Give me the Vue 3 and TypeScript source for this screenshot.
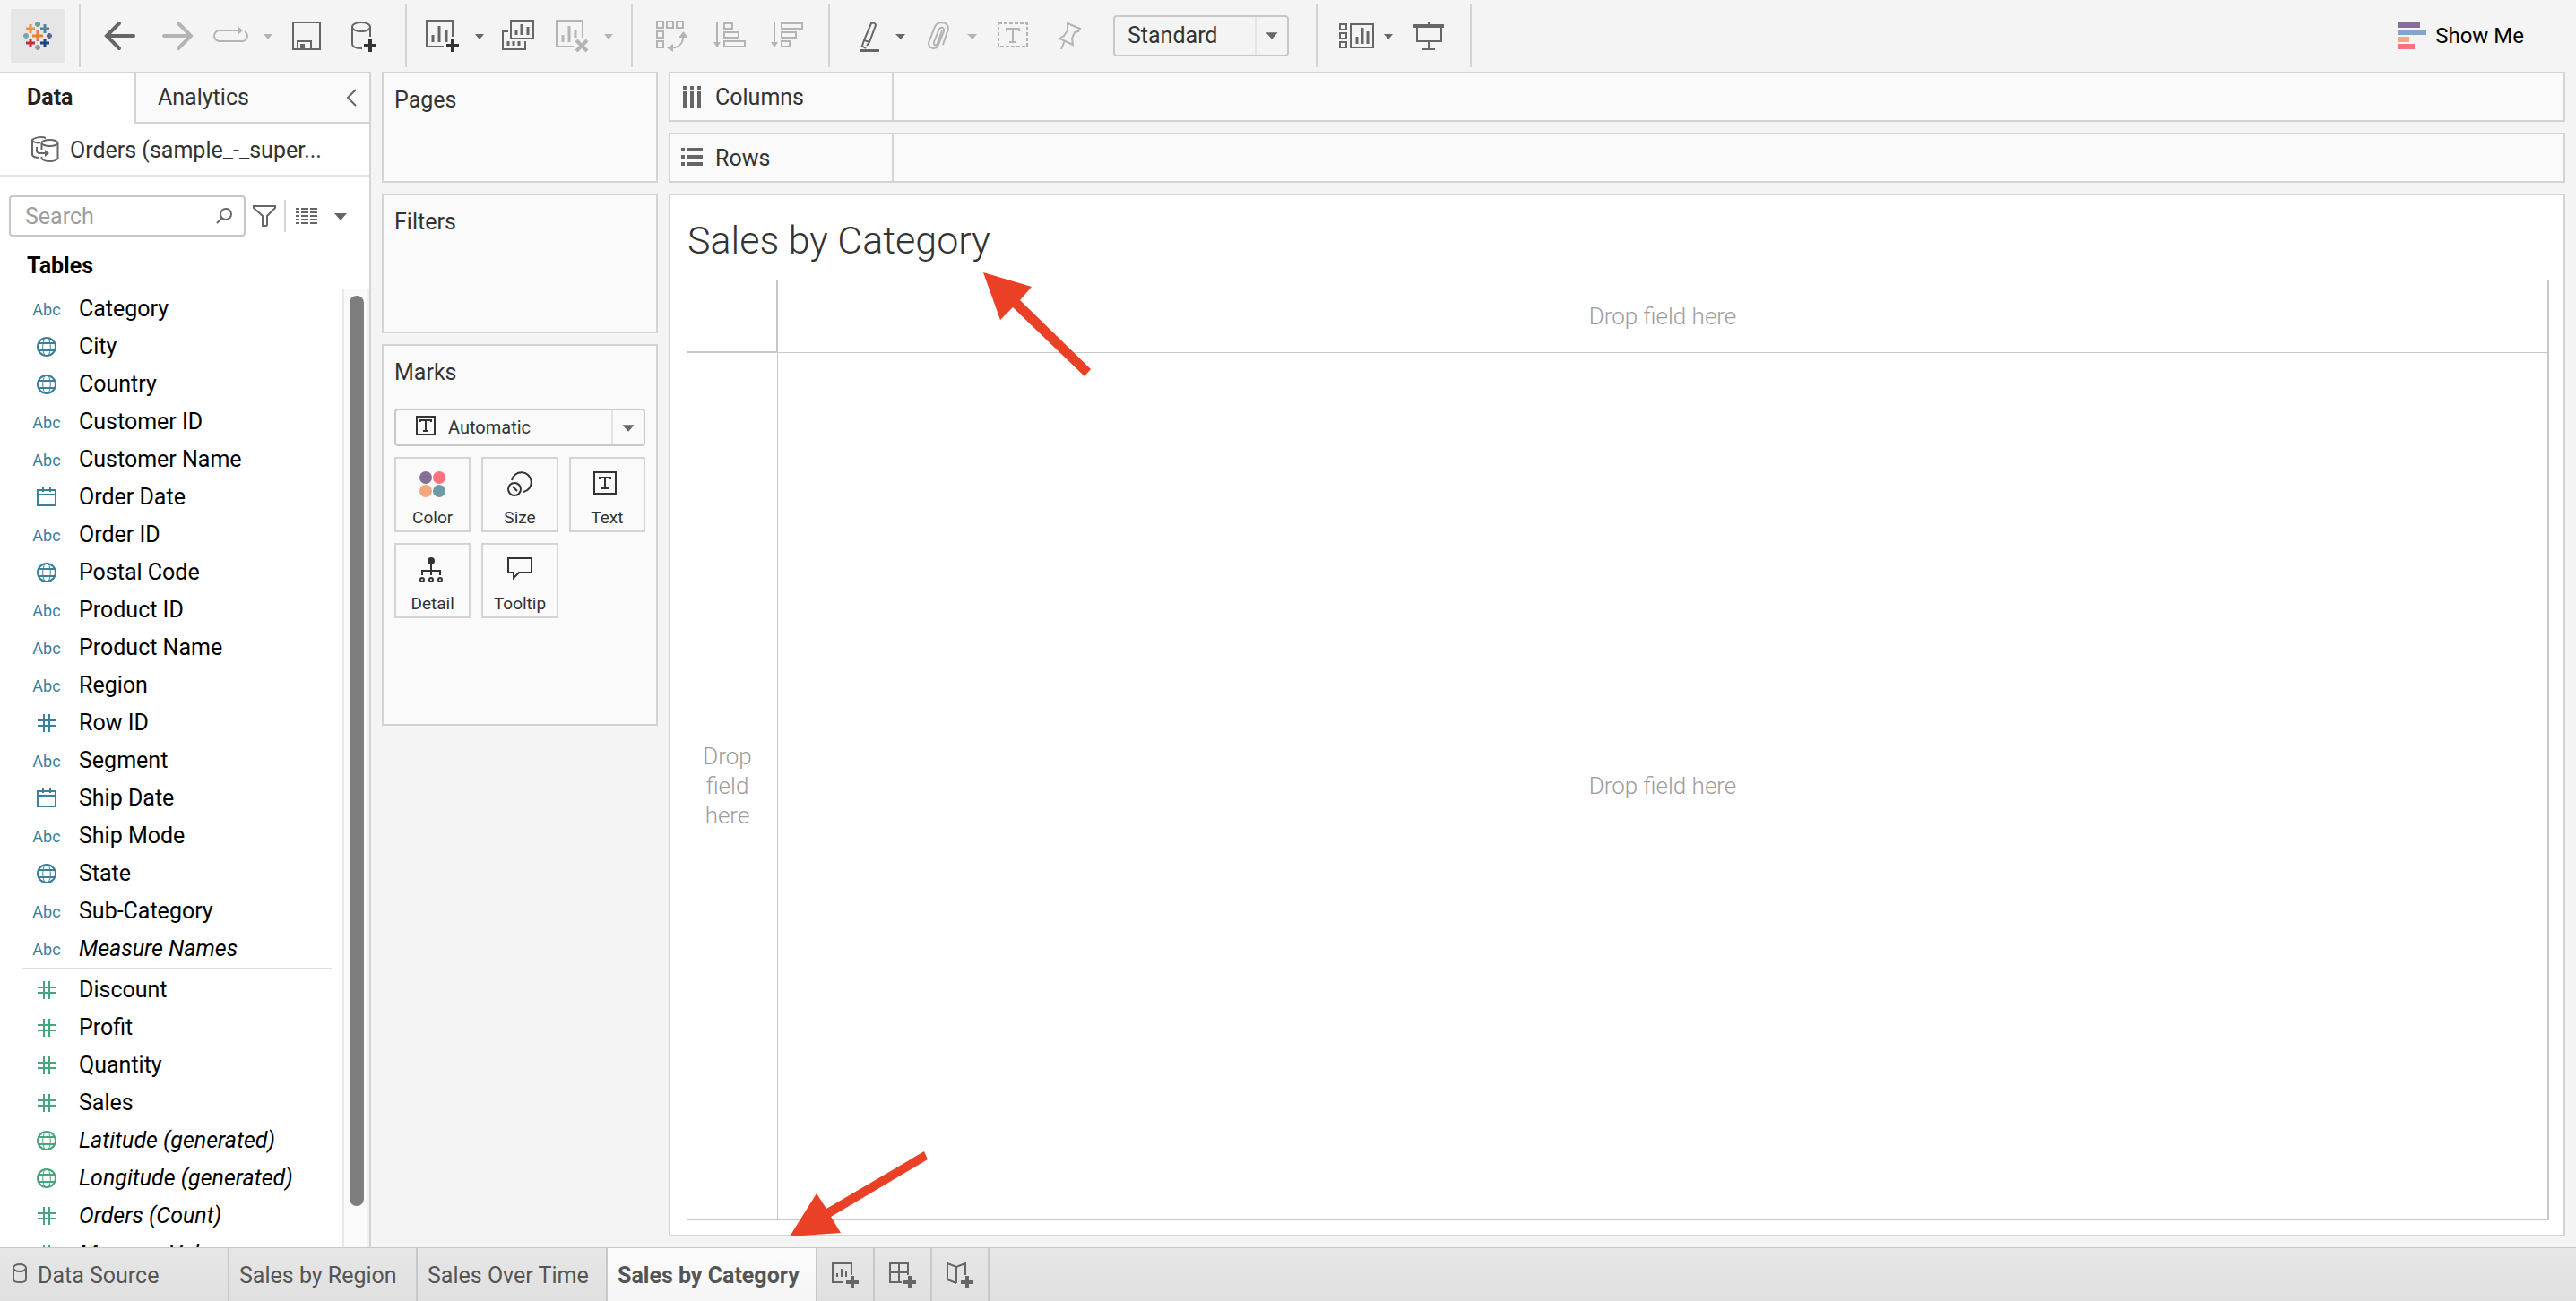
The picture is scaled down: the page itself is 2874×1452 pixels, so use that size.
<script setup lang="ts">
import { ref } from 'vue'

type Kind = 'abc' | 'geo' | 'date' | 'num'
interface Field {
  name: string
  kind: Kind
  generated?: boolean
}

const dimensions: Field[] = [
  { name: 'Category', kind: 'abc' },
  { name: 'City', kind: 'geo' },
  { name: 'Country', kind: 'geo' },
  { name: 'Customer ID', kind: 'abc' },
  { name: 'Customer Name', kind: 'abc' },
  { name: 'Order Date', kind: 'date' },
  { name: 'Order ID', kind: 'abc' },
  { name: 'Postal Code', kind: 'geo' },
  { name: 'Product ID', kind: 'abc' },
  { name: 'Product Name', kind: 'abc' },
  { name: 'Region', kind: 'abc' },
  { name: 'Row ID', kind: 'num' },
  { name: 'Segment', kind: 'abc' },
  { name: 'Ship Date', kind: 'date' },
  { name: 'Ship Mode', kind: 'abc' },
  { name: 'State', kind: 'geo' },
  { name: 'Sub-Category', kind: 'abc' },
  { name: 'Measure Names', kind: 'abc', generated: true },
]

const measures: Field[] = [
  { name: 'Discount', kind: 'num' },
  { name: 'Profit', kind: 'num' },
  { name: 'Quantity', kind: 'num' },
  { name: 'Sales', kind: 'num' },
  { name: 'Latitude (generated)', kind: 'geo', generated: true },
  { name: 'Longitude (generated)', kind: 'geo', generated: true },
  { name: 'Orders (Count)', kind: 'num', generated: true },
  { name: 'Measure Values', kind: 'num', generated: true },
]

const groups = [
  { id: 'dimensions', fields: dimensions },
  { id: 'measures', fields: measures },
]

const query = ref('')
const fit = ref('Standard')
const mark = ref('Automatic')
</script>

<template>
  <div class="app">
    <header class="toolbar">
      <button class="logo" aria-label="Home">
        <svg viewBox="12 10 60 60" width="60" height="60" fill="none" stroke-width="2">
          <path d="M36 40h12M42 34v12" stroke="#eb7f2c" />
          <path d="M29 32h10M34 27v10" stroke="#e8953a" />
          <path d="M45 32h10M50 27v10" stroke="#55859b" />
          <path d="M29 48h10M34 43v10" stroke="#c92a3a" />
          <path d="M45 48h10M50 43v10" stroke="#1f457e" />
          <path d="M39 27h6M42 24v6" stroke="#7099a6" />
          <path d="M26 40h6M29 37v6" stroke="#7ba0ae" />
          <path d="M52 40h6M55 37v6" stroke="#5b6591" />
          <path d="M39 53h6M42 50v6" stroke="#8f96b8" />
        </svg>
      </button>

      <div class="group g1">
        <button class="tool" aria-label="Undo">
          <svg viewBox="104 0 60 80"><path d="M149 40h-29M133 26l-14 14 14 14" class="thick" /></svg>
        </button>
        <button class="tool off" aria-label="Redo">
          <svg viewBox="166 0 60 80"><path d="M183 40h29M199 26l14 14-14 14" class="thick" /></svg>
        </button>
        <div class="pair">
          <button class="tool off" aria-label="Replay">
            <svg viewBox="228 0 60 80">
              <path d="M266 34h-21a6 6 0 0 0 0 12h26a6 6 0 0 0 2-11" class="thin" />
              <path d="M265 29l6 5-6 5z" class="solid" />
            </svg>
          </button>
          <button class="caret off" aria-label="Replay options"><svg viewBox="288 0 22 80"><path d="M294 38h10l-5 6z" class="solid" /></svg></button>
        </div>
        <button class="tool" aria-label="Save">
          <svg viewBox="312 0 60 80">
            <path d="M327 25h30v30h-30zM332 55v-9h15v9" />
            <path d="M335 49h5v5h-5z" class="solid" />
          </svg>
        </button>
        <button class="tool" aria-label="New data source">
          <svg viewBox="374 0 60 80">
            <ellipse cx="403" cy="30" rx="10" ry="5" />
            <path d="M393 30v19c0 3 4 5 11 5M413 30v11" />
            <path d="M406 51h14M413 44v14" class="badge" />
          </svg>
        </button>
      </div>

      <div class="group g2">
        <div class="pair">
          <button class="tool" aria-label="New worksheet">
            <svg viewBox="464 0 60 80">
              <path d="M495 52h-19v-29h29v18" />
              <path d="M483 39v8M490 29v18M498 33v14" class="bar" />
              <path d="M498 51h14M505 44v14" class="badge" />
            </svg>
          </button>
          <button class="caret" aria-label="New worksheet options"><svg viewBox="524 0 22 80"><path d="M530 38h10l-5 6z" class="solid" /></svg></button>
        </div>
        <button class="tool" aria-label="Duplicate">
          <svg viewBox="548 0 60 80">
            <path d="M570 23h25v20h-25zM567 35h-6v20h25v-9" />
            <path d="M576 33v6M582 27v12M589 30v9M567 46v5M573 46v5M579 46v5" class="bar" />
          </svg>
        </button>
        <div class="pair">
          <button class="tool off" aria-label="Clear sheet">
            <svg viewBox="610 0 60 80">
              <path d="M640 52h-19v-29h29v19" />
              <path d="M628 39v8M635 29v18M642 33v9" class="bar" />
              <path d="M643 45l12 12M655 45l-12 12" class="badge" />
            </svg>
          </button>
          <button class="caret off" aria-label="Clear options"><svg viewBox="670 0 22 80"><path d="M674 38h10l-5 6z" class="solid" /></svg></button>
        </div>
      </div>

      <div class="group g3">
        <button class="tool off" aria-label="Swap rows and columns">
          <svg viewBox="720 0 60 80">
            <path d="M733 24h7v7h-7zM744 24h7v7h-7zM755 24h7v7h-7zM733 35h7v7h-7zM733 46h7v7h-7z" />
            <path d="M762 41c0 7-4 12-12 12.500" />
            <path d="M757 42l5.500-7 5 7zM751 49l-7 4.500 7 4.500z" class="solid" />
          </svg>
        </button>
        <button class="tool off" aria-label="Sort ascending">
          <svg viewBox="784 0 60 80">
            <path d="M800 25v24M808 26h9v6h-9zM808 36h16v6h-16zM808 46h23v6h-23z" />
            <path d="M796 47h8l-4 6z" class="solid" />
          </svg>
        </button>
        <button class="tool off" aria-label="Sort descending">
          <svg viewBox="848 0 60 80">
            <path d="M864 25v24M872 26h23v6h-23zM872 36h16v6h-16zM872 46h9v6h-9z" />
            <path d="M860 47h8l-4 6z" class="solid" />
          </svg>
        </button>
      </div>

      <div class="group g4">
        <div class="pair">
          <button class="tool" aria-label="Highlight">
            <svg viewBox="936 0 60 80">
              <path d="M972 26c2-1 5 0 5 2l-7 19-6-2z M964 45l-2 6M970 47l-3 4M961 51l5 3" />
              <path d="M959 55h22v3h-22z" class="solid" />
            </svg>
          </button>
          <button class="caret" aria-label="Highlight options"><svg viewBox="996 0 22 80"><path d="M999 38h11l-5 6z" class="solid" /></svg></button>
        </div>
        <div class="pair">
          <button class="tool off" aria-label="Group members">
            <svg viewBox="1020 0 60 80">
              <path d="M1051 34l-5 14c-1 4-5 3-4-1l5-13c2-5 7-4 6 1l-6 15c-3 6-11 5-11-2l7-18c3-7 15-6 15 2l-6 18" class="thin" />
            </svg>
          </button>
          <button class="caret off" aria-label="Group options"><svg viewBox="1080 0 22 80"><path d="M1079 38h11l-5 6z" class="solid" /></svg></button>
        </div>
        <button class="tool off" aria-label="Show mark labels">
          <svg viewBox="1104 0 60 80">
            <path d="M1114 26h32v26h-32z" stroke-dasharray="4 2" />
            <path d="M1123 35v-3h14v3M1130 32v15M1126 47h8" />
          </svg>
        </button>
        <button class="tool off" aria-label="Fix axes">
          <svg viewBox="1166 0 60 80">
            <path d="M1191 26l14 6-2 3-4 1-3 7 1 7-15-7 5-3 4-6zM1188 45l-4 10" />
          </svg>
        </button>
        <label class="select fit">
          <select v-model="fit" aria-label="Fit">
            <option>Standard</option>
            <option>Fit Width</option>
            <option>Entire View</option>
          </select>
          <svg class="drop" viewBox="0 0 36 42"><path d="M11 17h14l-7 8z" class="solid" /></svg>
        </label>
      </div>

      <div class="group g5">
        <div class="pair">
          <button class="tool" aria-label="Show cards">
            <svg viewBox="1482 0 60 80">
              <path d="M1507 27h25v26h-25zM1495 27h7v6h-7zM1495 37h7v6h-7zM1495 47h7v6h-7z" />
              <path d="M1514 41v8M1520 31v18M1526 35v14" class="bar" />
            </svg>
          </button>
          <button class="caret" aria-label="Card options"><svg viewBox="1542 0 22 80"><path d="M1544 38h10l-5 6z" class="solid" /></svg></button>
        </div>
        <button class="tool" aria-label="Presentation mode">
          <svg viewBox="1566 0 60 80">
            <path d="M1577 27h34v4h-34z" class="solid" />
            <path d="M1581 31v15h27v-15M1594 24v4M1594 46v9M1587 55h14" />
          </svg>
        </button>
      </div>

      <button class="show-me">
        <svg viewBox="0 0 32 30" width="32" height="30">
          <path d="M0 0h25v6H0z" fill="#856f96" />
          <path d="M0 8h32v6H0z" fill="#82a4cd" />
          <path d="M0 16h13v6H0z" fill="#f3a77d" />
          <path d="M0 24h19v6H0z" fill="#fb7180" />
        </svg>
        Show Me
      </button>
    </header>

    <main class="body">
      <aside class="side">
        <div class="side-tabs">
          <button class="side-tab current">Data</button>
          <button class="side-tab">Analytics</button>
          <button class="collapse" aria-label="Collapse pane">
            <svg viewBox="0 0 12 20" width="12" height="20"><path d="M11 1l-9 9 9 9" /></svg>
          </button>
        </div>
        <div class="source">
          <svg viewBox="35 151 30 31" width="30" height="31">
            <path d="M51 154c-4-2-12-1-15 2v17c1 2 4 3 8 3M36 157c2 2 6 3 9 2" />
            <ellipse cx="55.500" cy="159.500" rx="9" ry="3.500" />
            <path d="M46.500 160v7M64.500 160v17c-3 4-15 4-18 0v-2M41 164v4c0 3 2 3 4 3h7" />
            <path d="M50 167l5 4-5 4z" class="solid" />
          </svg>
          <span>Orders (sample_-_super...</span>
        </div>
        <div class="search-row">
          <div class="search">
            <input v-model="query" type="text" placeholder="Search" aria-label="Search" />
            <svg viewBox="0 0 18 18" width="18" height="18"><circle cx="11" cy="7" r="6" /><path d="M7 11l-6 6" /></svg>
          </div>
          <button class="mini" aria-label="Filter fields">
            <svg viewBox="0 0 26 24" width="26" height="24"><path d="M1 1h24v2l-9 9v10l-1 1h-4v-11l-10-9z" /></svg>
          </button>
          <button class="mini view-as" aria-label="View as list">
            <svg viewBox="0 0 58 20" width="58" height="20">
              <path d="M0 2h24M0 6h24M0 10h24M0 14h24M0 18h24" stroke-dasharray="4 2 8 2 8 2" />
              <path d="M43 7h14l-7 8z" class="solid" />
            </svg>
          </button>
        </div>
        <h2 class="tables">Tables</h2>
        <div class="list-area">
          <div class="lists">
            <ul v-for="g in groups" :key="g.id" :class="['fields', g.id]">
              <li v-for="f in g.fields" :key="f.name" :class="{ generated: f.generated }" draggable="true">
                <span class="kind">
                  <span v-if="f.kind === 'abc'" class="abc">Abc</span>
                  <svg v-else viewBox="0 0 24 24" width="24" height="24">
                    <template v-if="f.kind === 'geo'">
                      <circle cx="12" cy="12" r="10" />
                      <path d="M3 8h18M3 16h18" />
                      <path d="M10 2c-3 6-3 14 0 20M14 2c3 6 3 14 0 20" class="mesh" />
                    </template>
                    <path v-else-if="f.kind === 'date'" d="M2 4h20v17H2zM2 9h20M8 1v5M16 1v5" />
                    <path v-else d="M2 9h20M2 15h20M9 2v20M15 2v20" />
                  </svg>
                </span>
                <span>{{ f.name }}</span>
              </li>
            </ul>
          </div>
          <div class="track"><div class="thumb"></div></div>
        </div>
      </aside>

      <div class="cards">
        <section class="card pages"><h3>Pages</h3></section>
        <section class="card filters"><h3>Filters</h3></section>
        <section class="card marks">
          <h3>Marks</h3>
          <label class="select mark-type">
            <svg class="mark-icon" viewBox="0 0 22 22" width="22" height="22">
              <path d="M1 1h20v20H1zM5 7V5h12v2M11 5v12M8 17h6" />
            </svg>
            <select v-model="mark" aria-label="Mark type">
              <option>Automatic</option>
              <option>Bar</option>
              <option>Line</option>
            </select>
            <svg class="drop" viewBox="0 0 36 38"><path d="M11 16h14l-7 8z" class="solid" /></svg>
          </label>
          <div class="mark-grid">
            <button>
              <svg viewBox="1 0 32 32">
                <g stroke="none">
                  <circle cx="9" cy="9" r="7" fill="#856f96" /><circle cx="24" cy="9" r="7" fill="#fb7180" />
                  <circle cx="9" cy="24" r="7" fill="#f3a77d" /><circle cx="24" cy="24" r="7" fill="#7099a6" />
                </g>
              </svg>
              Color
            </button>
            <button>
              <svg viewBox="0 0 32 32">
                <path d="M7 12a11 11 0 1 1 13 13" /><circle cx="10" cy="22" r="7" /><path d="M8 19l5 5" />
              </svg>
              Size
            </button>
            <button>
              <svg viewBox="2 0 32 32"><path d="M4 3h24v24H4zM10 11V9h12v2M16 9v12M12 21h8" /></svg>
              Text
            </button>
            <button>
              <svg viewBox="2 0 32 32">
                <circle cx="16" cy="6" r="4" class="solid" />
                <path d="M16 9v13M6 22v-5h20v5" />
                <circle cx="6" cy="27" r="2" /><circle cx="16" cy="27" r="2" /><circle cx="26" cy="27" r="2" />
              </svg>
              Detail
            </button>
            <button>
              <svg viewBox="0 0 32 32"><path d="M3 3h26v16H15l-6 6v-6H3z" /></svg>
              Tooltip
            </button>
          </div>
        </section>
      </div>

      <div class="workspace">
        <section class="shelf">
          <h3>
            <svg viewBox="0 0 24 24"><path d="M2 0v4M2 6v18M10 0v4M10 6v18M18 0v4M18 6v18" /></svg>
            <span>Columns</span>
          </h3>
        </section>
        <section class="shelf">
          <h3>
            <svg viewBox="2 1 24 24"><path d="M0 4h4M6 4h18M0 12h4M6 12h18M0 20h4M6 20h18" /></svg>
            <span>Rows</span>
          </h3>
        </section>
        <section class="view">
          <h1>Sales by Category</h1>
          <div class="pane">
            <div class="corner"></div>
            <div class="col-drop">Drop field here</div>
            <div class="row-drop"><span>Drop field here</span></div>
            <div class="mid-drop">Drop field here</div>
          </div>
          <svg class="arrow arrow-title" viewBox="1096 303 122 118" width="122" height="118">
            <path d="M1097 304l54 16-13 15 79 77-7 8-80-77-14 14z" />
          </svg>
        </section>
      </div>
    </main>

    <footer class="sheets">
      <button class="sheet source-tab">
        <svg viewBox="0 2 18 24" width="18" height="24"><ellipse cx="9" cy="6" rx="7" ry="4" /><path d="M2 6v13c0 4 14 4 14 0V6" /></svg>
        <span>Data Source</span>
      </button>
      <button class="sheet region">Sales by Region</button>
      <button class="sheet time">Sales Over Time</button>
      <button class="sheet category">Sales by Category</button>
      <button class="sheet add" aria-label="New worksheet">
        <svg viewBox="0 0 32 32">
          <path d="M13 23H2V2h21v13" /><path d="M7 13v4M12 8v9M17 11v6" /><path d="M17 23h14M24 16v14" class="plus" />
        </svg>
      </button>
      <button class="sheet add" aria-label="New dashboard">
        <svg viewBox="0 0 32 32">
          <path d="M15 23H2V2h20v13M12 2v21M2 12h20" /><path d="M17 23h14M24 16v14" class="plus" />
        </svg>
      </button>
      <button class="sheet add" aria-label="New story">
        <svg viewBox="0 0 32 32">
          <path d="M12 24L2 20V2l10 4 10-4v13M12 6v18" /><path d="M17 23h14M24 16v14" class="plus" />
        </svg>
      </button>
      <svg class="arrow arrow-tab" viewBox="880 1284 156 98" width="156" height="98">
        <path d="M881 1380l30-48 11 17 109-64 4 9-108 64 11 18z" />
      </svg>
    </footer>
  </div>
</template>

<style>
body {
  margin: 0;
}
</style>

<style scoped>
* {
  box-sizing: border-box;
}
.app {
  display: flex;
  flex-direction: column;
  height: 100vh;
  overflow: hidden;
  background: #f4f4f4;
  color: #333;
  font-family: Roboto, 'Liberation Sans', sans-serif;
  font-size: 25px;
  line-height: 30px;
}
button {
  margin: 0;
  padding: 0;
  border: 0;
  background: none;
  color: inherit;
  font: inherit;
  text-align: center;
}
h1,
h2,
h3 {
  margin: 0;
  font-size: 25px;
  font-weight: 400;
}
svg {
  display: block;
  flex: none;
  overflow: visible;
  fill: none;
  stroke: #666;
  stroke-width: 2;
}
.solid {
  fill: #666;
  stroke: none;
}

/* Toolbar */
.toolbar {
  display: flex;
  align-items: center;
  flex: none;
  height: 80px;
  padding-left: 12px;
}
.logo {
  width: 60px;
  height: 60px;
  margin-right: 16px;
  background: #e6e6e6;
}
.logo svg {
  stroke-width: 3;
}
.group {
  display: flex;
  align-items: center;
  gap: 2px;
  height: 70px;
  border-left: 2px solid #d4d4d4;
}
.g1 {
  padding: 0 18px 0 14px;
}
.g2 {
  padding: 0 12px 0 10px;
}
.g3 {
  gap: 4px;
  padding: 0 16px 0 14px;
}
.g4 {
  padding: 0 30px 0 10px;
}
.g5 {
  padding: 0 14px 0 12px;
  border-right: 2px solid #d4d4d4;
}
.pair {
  display: flex;
}
.tool svg {
  width: 60px;
  height: 80px;
}
.caret svg {
  width: 22px;
  height: 80px;
}
.tool .thick {
  stroke-width: 4;
  stroke-linecap: round;
}
.tool .thin {
  stroke-width: 2;
}
.tool .bar {
  stroke-width: 3;
}
.tool .badge {
  stroke: #333;
  stroke-width: 4;
}
.off svg,
.tool.off .badge {
  stroke: #b4b4b4;
}
.off .solid {
  fill: #b4b4b4;
}
.select {
  position: relative;
  display: flex;
  align-items: center;
  border: 2px solid #c8c8c8;
  border-radius: 4px;
}
.select select {
  flex: 1;
  min-width: 0;
  height: 100%;
  padding: 0;
  border: 0;
  background: none;
  color: #333;
  font: inherit;
  appearance: none;
}
.drop {
  width: 36px;
  height: 100%;
  border-left: 2px solid #e4e4e4;
}
.fit {
  width: 196px;
  height: 46px;
  margin-left: 14px;
}
.fit select {
  padding-left: 14px;
}
.show-me {
  display: flex;
  align-items: center;
  gap: 10px;
  margin-left: auto;
  margin-right: 58px;
  color: #000;
  font-size: 24px;
}
.show-me svg {
  stroke: none;
}

/* Body */
.body {
  display: flex;
  flex: 1;
  gap: 12px;
  min-height: 0;
}
.side {
  display: flex;
  flex-direction: column;
  flex: none;
  width: 414px;
  border-top: 2px solid #d4d4d4;
  border-right: 2px solid #d4d4d4;
  background: #fff;
}
.side-tabs {
  display: flex;
  flex: none;
  height: 56px;
}
.side-tab {
  flex: 1;
  padding: 0 0 0 24px;
  border-bottom: 2px solid #d4d4d4;
  background: #fafafa;
  text-align: left;
}
.side-tab.current {
  flex: none;
  width: 152px;
  padding: 0 0 2px 30px;
  border-right: 2px solid #d4d4d4;
  border-bottom: 0;
  background: #fff;
  color: #222;
  font-weight: 700;
}
.collapse {
  width: 29px;
  padding-left: 3px;
  border-bottom: 2px solid #d4d4d4;
  background: #fafafa;
}
.source {
  display: flex;
  align-items: center;
  flex: none;
  gap: 13px;
  height: 59px;
  padding-left: 35px;
  border-bottom: 2px solid #e4e4e4;
}
.search-row {
  display: flex;
  align-items: center;
  flex: none;
  height: 46px;
  margin-top: 21px;
  padding-left: 10px;
}
.search {
  display: flex;
  align-items: center;
  width: 264px;
  height: 46px;
  padding: 0 13px 0 16px;
  border: 2px solid #c8c8c8;
  border-radius: 4px;
}
.search input {
  flex: 1;
  min-width: 0;
  padding: 2px 0 0;
  border: 0;
  outline: 0;
  background: none;
  color: #333;
  font: inherit;
}
.search input::placeholder {
  color: #9d9d9d;
  opacity: 1;
}
.mini {
  display: flex;
  align-items: center;
  height: 36px;
  padding: 0 9px 0 8px;
}
.view-as {
  padding-left: 11px;
  border-left: 2px solid #d4d4d4;
}
.tables {
  flex: none;
  height: 58px;
  padding: 18px 0 0 30px;
  color: #000;
  font-weight: 700;
}
.list-area {
  display: flex;
  flex: 1;
  min-height: 0;
}
.lists {
  flex: 1;
  overflow: hidden;
}
.fields {
  margin: 0;
  padding: 0;
  list-style: none;
}
.fields li {
  display: flex;
  align-items: center;
  gap: 16px;
  height: 42px;
  padding: 3px 0 0 32px;
  color: #000;
}
.generated {
  font-style: italic;
}
.measures {
  margin: 2px 12px 0 24px;
  border-top: 2px solid #e0e0e0;
}
.fields.measures li {
  padding-left: 8px;
}
.kind {
  display: flex;
  justify-content: center;
  width: 40px;
  font-style: normal;
}
.abc {
  padding-top: 2px;
  color: #3a7f9c;
  font-size: 18px;
}
.kind svg {
  stroke: #3a7f9c;
}
.measures .kind svg {
  stroke: #46a57c;
}
.kind svg .mesh {
  stroke-width: 1;
}
.track {
  width: 30px;
  padding: 8px 6px 46px;
  border-left: 2px solid #e8e8e8;
  border-right: 2px solid #f0f0f0;
  background: #fafafa;
}
.thumb {
  width: 16px;
  height: 100%;
  border-radius: 8px;
  background: #7d7d7d;
}

/* Cards */
.cards {
  display: flex;
  flex-direction: column;
  flex: none;
  gap: 12px;
  width: 308px;
}
.card {
  padding: 15px 12px;
  border: 2px solid #d4d4d4;
  background: #fafafa;
}
.pages {
  height: 124px;
}
.filters {
  height: 156px;
}
.marks {
  height: 426px;
}
.mark-type {
  height: 42px;
  margin: 25px 0 12px;
  font-size: 20px;
}
.mark-icon {
  margin: 0 14px 4px 22px;
}
.marks svg {
  stroke: #333;
}
.mark-grid .solid {
  fill: #333;
}
.mark-grid {
  display: grid;
  grid-template-columns: repeat(3, 1fr);
  gap: 12px;
}
.mark-grid button {
  display: flex;
  flex-direction: column;
  align-items: center;
  gap: 10px;
  height: 84px;
  padding-top: 12px;
  border: 2px solid #d4d4d4;
  font-size: 19px;
  line-height: 24px;
}
.mark-grid svg {
  width: 32px;
  height: 32px;
}

/* Workspace */
.workspace {
  display: flex;
  flex-direction: column;
  flex: 1;
  gap: 12px;
  min-width: 0;
  padding: 0 12px 12px 0;
}
.shelf {
  display: flex;
  flex: none;
  height: 56px;
  border: 2px solid #d4d4d4;
  background: #fafafa;
}
.shelf h3 {
  display: flex;
  align-items: center;
  gap: 12px;
  width: 249px;
  padding-left: 14px;
  border-right: 2px solid #d4d4d4;
}
.shelf span,
.source span,
.source-tab span {
  padding-top: 2px;
}
.shelf svg {
  width: 24px;
  height: 24px;
  stroke-width: 4;
}
.view {
  position: relative;
  display: flex;
  flex-direction: column;
  flex: 1;
  padding: 0 16px 16px 18px;
  border: 2px solid #d4d4d4;
  background: #fff;
}
.view h1 {
  height: 94px;
  padding: 6px 0 0 1px;
  font-size: 43px;
  font-weight: 300;
  line-height: 88px;
}
.pane {
  display: grid;
  flex: 1;
  grid-template-columns: 102px 1fr;
  grid-template-rows: 82px 1fr;
  color: #9d9d9d;
  font-size: 26px;
  font-weight: 300;
  line-height: 33px;
  text-align: center;
}
.pane > div {
  display: flex;
  align-items: center;
  justify-content: center;
  border: 0 solid #c8c8c8;
}
.pane .corner {
  border-width: 0 2px 2px 0;
}
.pane .col-drop {
  padding-top: 2px;
  border-width: 0 2px 1px 0;
}
.pane .row-drop {
  padding: 0 26px 0 16px;
  border-width: 0 1px 2px 0;
}
.pane .mid-drop {
  border-width: 0 2px 2px 0;
}
.arrow {
  position: absolute;
  fill: #ea4025;
  stroke: none;
}
.arrow-title {
  left: 348px;
  top: 85px;
}
.arrow-tab {
  left: 880px;
  top: -109px;
}

/* Sheet tabs */
.sheets {
  position: relative;
  display: flex;
  flex: none;
  height: 60px;
  border-top: 1px solid #c8c8c8;
  background: linear-gradient(#e6e6e6, #e0e0e0);
  color: #555;
}
.sheet {
  padding: 2px 0 0 11px;
  border-right: 2px solid #c8c8c8;
  text-align: left;
}
.source-tab {
  display: flex;
  align-items: center;
  gap: 11px;
  width: 256px;
  padding: 0 0 0 13px;
}
.region {
  width: 210px;
}
.time {
  width: 212px;
}
.category {
  width: 234px;
  background: linear-gradient(#fcfcfc, #f5f5f5);
  font-weight: 700;
}
.add {
  display: flex;
  align-items: center;
  justify-content: center;
  width: 64px;
  padding: 2px 0 0;
}
.add svg {
  width: 32px;
  height: 32px;
}
.add .plus {
  stroke-width: 4;
}
</style>
